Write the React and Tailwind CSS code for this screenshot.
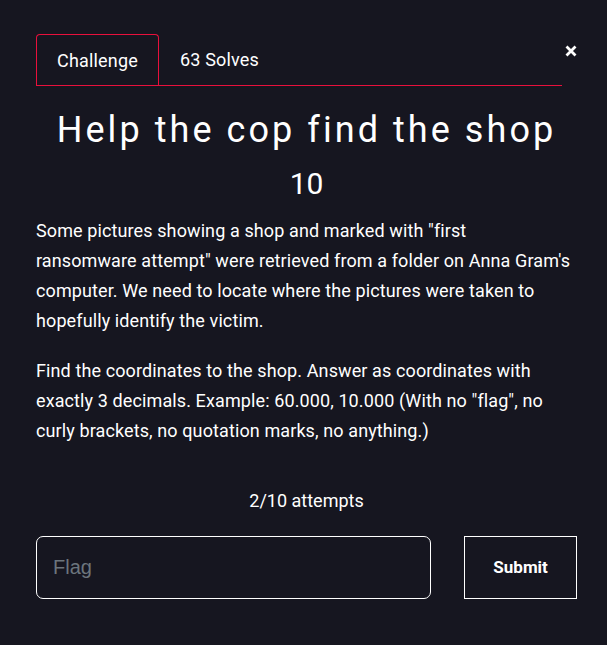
const font = { fontFamily: 'Roboto, "Liberation Sans", sans-serif' }

export default function App() {
  return (
    <div className="min-h-screen bg-[#161620] text-white" style={font}>
      <div className="pl-9 pr-[30px] pt-[34px]">
        {/* Tabs */}
        <div className="flex items-start">
          <nav className="flex flex-1 border-b border-[#e8103c]">
            <button className="h-[51px] rounded-t-[4px] border border-b-0 border-[#e8103c] px-5 text-[18px] tracking-[0.01em]">
              Challenge
            </button>
            <button className="h-[51px] px-[21px] text-[18px] tracking-[0.01em]">63 Solves</button>
          </nav>
          <button className="mt-[11px] ml-[3px] text-white">
            <svg width="12" height="12" viewBox="0 0 12 12" className="block">
              <path d="M1.5 1.5 L10.5 10.5 M10.5 1.5 L1.5 10.5" stroke="currentColor" strokeWidth="2.8" />
            </svg>
          </button>
        </div>

        {/* Header */}
        <h2 className="mt-5 text-center text-[36px] leading-[48px] tracking-[0.085em]">
          Help the cop find the shop
        </h2>
        <h3 className="mt-3 text-center text-[30px] leading-[36px]">10</h3>

        {/* Description */}
        <div className="mt-[14px] w-[552px] text-[18px] leading-[30px] tracking-[0.006em]">
          <p>
            Some pictures showing a shop and marked with "first
            <br />
            ransomware attempt" were retrieved from a folder on Anna Gram's
            <br />
            computer. We need to locate where the pictures were taken to
            <br />
            hopefully identify the victim.
          </p>
          <p className="mt-5">
            Find the coordinates to the shop. Answer as coordinates with
            <br />
            exactly 3 decimals. Example: 60.000, 10.000 (With no "flag", no
            <br />
            curly brackets, no quotation marks, no anything.)
          </p>
        </div>

        <p className="mt-[43px] text-center text-[18px] leading-6">2/10 attempts</p>

        {/* Submit row */}
        <div className="mt-[23px] flex gap-[33px]">
          <input
            placeholder="Flag"
            className="h-[63px] w-[396px] rounded-[7px] border border-white bg-transparent px-4 text-[20px] text-white outline-none placeholder:text-[#6c757d]"
            style={{ fontFamily: '"Liberation Sans", Arial, sans-serif' }}
          />
          <button className="h-[63px] w-[113px] border-[1.5px] border-white text-[17px] font-bold">
            Submit
          </button>
        </div>
      </div>
    </div>
  )
}
